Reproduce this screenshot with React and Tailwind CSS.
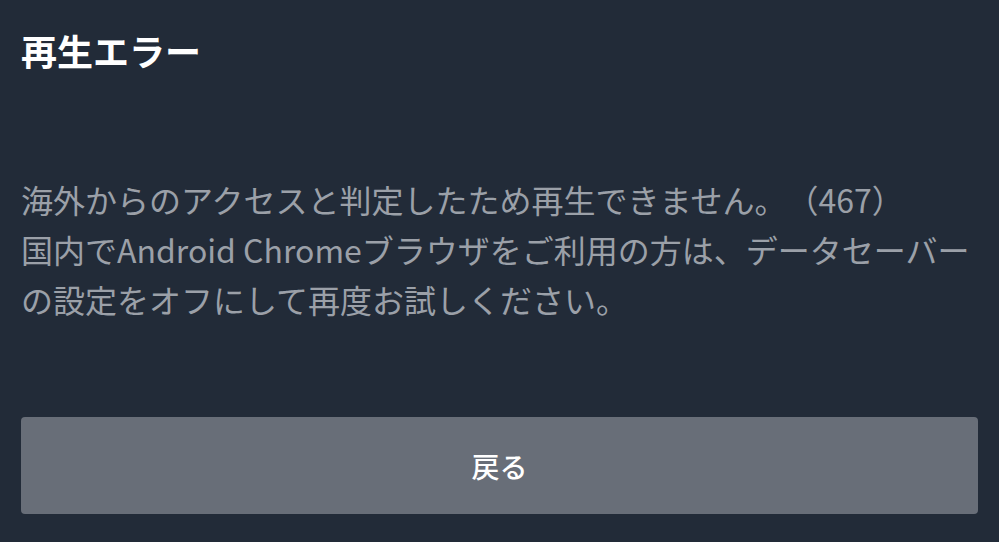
export default function App() {
  return (
    <div
      className="w-full h-[542px] bg-[#222b38] flex flex-col px-[21px] overflow-hidden [text-spacing-trim:space-all]"
      style={{ fontFamily: '"Noto Sans CJK JP", "Noto Sans", sans-serif' }}
    >
      <h1 className="pt-[23px] text-[36px] leading-[54px] font-bold text-white">再生エラー</h1>
      <div className="mt-[97px] text-[32px] leading-[50px] text-[#9ba0a8] whitespace-nowrap">
        <div>海外からのアクセスと判定したため再生できません。（467）</div>
        <div>国内でAndroid Chromeブラウザをご利用の方は、データセーバー</div>
        <div>の設定をオフにして再度お試しください。</div>
      </div>
      <button className="mt-[93px] h-[97px] w-full rounded-[4px] bg-[#686e78] text-white text-[28px] font-medium flex items-center justify-center">
        戻る
      </button>
    </div>
  );
}
